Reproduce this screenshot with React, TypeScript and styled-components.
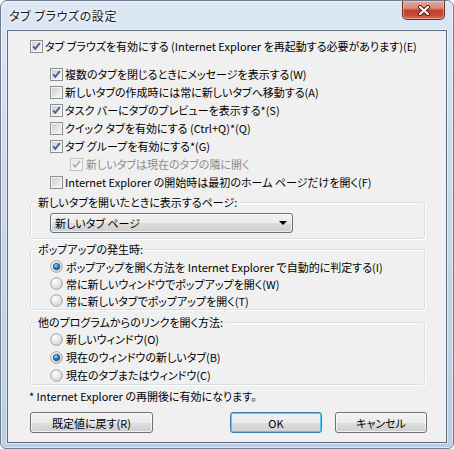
import * as React from 'react';
import styled, { createGlobalStyle } from 'styled-components';

const Global = createGlobalStyle`
  html, body {
    margin: 0;
    padding: 0;
    background: #ffffff;
  }
  body {
    font-family: "Noto Sans CJK JP", "Noto Sans", sans-serif;
  }
`;

const Window = styled.div`
  box-sizing: border-box;
  width: 454px;
  height: 449px;
  border: 1px solid #6f7c8b;
  border-radius: 7px 7px 6px 6px;
  padding: 0 6px 5px 6px;
  display: flex;
  flex-direction: column;
  background: linear-gradient(180deg, #dce7f3 0%, #cddcec 30%, #c2d3e7 70%, #bccee4 100%);
  box-shadow: inset 0 0 0 1px rgba(255, 255, 255, 0.55);
`;

const TitleBar = styled.div`
  height: 29px;
  display: flex;
  justify-content: space-between;
  align-items: flex-start;
`;

const Title = styled.div`
  padding: 6px 0 0 2px;
  font-size: 12px;
  line-height: 17px;
  letter-spacing: 0.6px;
  font-feature-settings: "palt";
  color: #1b1b1b;
  text-shadow: 0 0 6px #ffffff, 0 0 3px #ffffff;
`;

const CloseButton = styled.div`
  box-sizing: border-box;
  width: 43px;
  height: 19px;
  margin-right: 2px;
  border: 1px solid #6e2c22;
  border-top: none;
  border-radius: 0 0 5px 5px;
  background: linear-gradient(180deg, #e9a898 0%, #d88a7a 40%, #c4402a 52%, #c54b35 80%, #d97a5c 100%);
  box-shadow: inset 0 0 0 1px rgba(255, 220, 210, 0.45);
  display: flex;
  align-items: center;
  justify-content: center;
`;

const Client = styled.div`
  box-sizing: border-box;
  flex: 1;
  border: 1px solid #5d6b7c;
  background: #f0f0f0;
  padding: 6px 21px 0 22px;
  box-shadow: 0 0 0 1px rgba(255, 255, 255, 0.5);
  font-size: 11px;
  font-feature-settings: "palt";
  color: #000000;
`;

const Row = styled.div<{ $indent?: number; $h?: number; $gap?: number; $disabled?: boolean }>`
  display: flex;
  align-items: center;
  height: ${p => p.$h ?? 18}px;
  margin-left: ${p => p.$indent ?? 0}px;
  gap: ${p => p.$gap ?? 2}px;
  white-space: nowrap;
  color: ${p => (p.$disabled ? '#8d8d8d' : '#000000')};
`;

const SubList = styled.div`
  margin-top: 10px;
`;

const Group = styled.div<{ $top: number; $pt: number }>`
  position: relative;
  margin-top: ${p => p.$top}px;
  border: 1px solid #d5dfe5;
  border-radius: 3px;
  box-shadow: inset 1px 1px 0 #ffffff, 1px 1px 0 #ffffff;
  padding: ${p => p.$pt}px 0 0 19px;
`;

const Legend = styled.span`
  position: absolute;
  left: 5px;
  top: -8px;
  padding: 0 2px;
  line-height: 14px;
  background: #f0f0f0;
  white-space: nowrap;
`;

const Select = styled.div`
  box-sizing: border-box;
  width: 243px;
  height: 20px;
  margin-bottom: 5px;
  border: 1px solid #707070;
  border-radius: 3px;
  background: linear-gradient(180deg, #f2f2f2 0%, #ebebeb 50%, #dddddd 51%, #cfcfcf 100%);
  box-shadow: inset 0 0 0 1px rgba(255, 255, 255, 0.6);
  display: flex;
  align-items: center;
  justify-content: space-between;
  padding: 0 5px 0 4px;
`;

const Arrow = styled.span`
  width: 0;
  height: 0;
  border-left: 4px solid transparent;
  border-right: 4px solid transparent;
  border-top: 4px solid #000000;
`;

const Note = styled.div`
  margin-top: 4px;
  line-height: 14px;
  margin-left: -1px;
`;

const Footer = styled.div`
  margin-top: 9px;
  margin-right: -2px;
  display: flex;
  gap: 13px;
`;

const Spacer = styled.div`
  flex: 1;
`;

const Button = styled.div<{ $w: number; $default?: boolean }>`
  box-sizing: border-box;
  width: ${p => p.$w}px;
  height: 21px;
  border: 1px solid ${p => (p.$default ? '#3c7fb1' : '#707070')};
  border-radius: 3px;
  background: linear-gradient(180deg, #f2f2f2 0%, #ebebeb 50%, #dddddd 51%, #cfcfcf 100%);
  box-shadow: inset 0 0 0 1px ${p => (p.$default ? '#48d0f5' : 'rgba(255,255,255,0.7)')};
  display: flex;
  align-items: center;
  justify-content: center;
  font-size: 11px;
`;

function CheckBox({ checked, disabled }: { checked?: boolean; disabled?: boolean }) {
  const id = disabled ? 'cbd' : 'cb';
  return (
    <svg width="13" height="13" viewBox="0 0 13 13">
      <defs>
        <linearGradient id={id} x1="0" y1="0" x2="1" y2="1">
          <stop offset="0" stopColor={disabled ? '#e6e6e6' : '#cbcfd5'} />
          <stop offset="1" stopColor={disabled ? '#f8f8f8' : '#f6f6f6'} />
        </linearGradient>
      </defs>
      <rect x="0.5" y="0.5" width="12" height="12" fill="#f4f4f4" stroke={disabled ? '#c2c2c2' : '#8e8f8f'} />
      <rect x="2" y="2" width="9" height="9" fill={`url(#${id})`} />
      {checked && (
        <path
          d="M3.2 6.3 L5.3 8.8 L9.8 3.2"
          fill="none"
          stroke={disabled ? '#b3b3b3' : '#4a5f8f'}
          strokeWidth="1.9"
        />
      )}
    </svg>
  );
}

function Radio({ checked }: { checked?: boolean }) {
  return (
    <svg width="13" height="13" viewBox="0 0 13 13">
      <defs>
        <radialGradient id="rbg" cx="0.35" cy="0.3" r="0.8">
          <stop offset="0" stopColor="#ffffff" />
          <stop offset="1" stopColor="#d0d0d0" />
        </radialGradient>
        <radialGradient id="rdot" cx="0.4" cy="0.35" r="0.7">
          <stop offset="0" stopColor="#a8e0fc" />
          <stop offset="0.45" stopColor="#2d86d0" />
          <stop offset="1" stopColor="#0b3f7f" />
        </radialGradient>
      </defs>
      <circle cx="6.5" cy="6.5" r="5.8" fill="url(#rbg)" stroke="#9a9a9a" strokeWidth="0.9" />
      {checked && <circle cx="6.5" cy="6.5" r="3.3" fill="url(#rdot)" stroke="#1d3f6b" strokeWidth="0.6" />}
    </svg>
  );
}

const subItems: { text: string; checked?: boolean; disabled?: boolean; indent?: boolean }[] = [
  { text: '複数のタブを閉じるときにメッセージを表示する(W)', checked: true },
  { text: '新しいタブの作成時には常に新しいタブへ移動する(A)' },
  { text: 'タスク バーにタブのプレビューを表示する*(S)', checked: true },
  { text: 'クイック タブを有効にする (Ctrl+Q)*(Q)' },
  { text: 'タブ グループを有効にする*(G)', checked: true },
  { text: '新しいタブは現在のタブの隣に開く', checked: true, disabled: true, indent: true },
  { text: 'Internet Explorer の開始時は最初のホーム ページだけを開く(F)' },
];

const popupItems = [
  { text: 'ポップアップを開く方法を Internet Explorer で自動的に判定する(I)', checked: true },
  { text: '常に新しいウィンドウでポップアップを開く(W)' },
  { text: '常に新しいタブでポップアップを開く(T)' },
];

const linkItems = [
  { text: '新しいウィンドウ(O)' },
  { text: '現在のウィンドウの新しいタブ(B)', checked: true },
  { text: '現在のタブまたはウィンドウ(C)' },
];

function App() {
  return (
    <>
      <Global />
      <Window>
        <TitleBar>
          <Title>タブ ブラウズの設定</Title>
          <CloseButton>
            <svg width="14" height="11" viewBox="0 0 14 11">
              <path d="M3 2 L11 9 M11 2 L3 9" stroke="#4d1c14" strokeWidth="4" strokeLinecap="round" />
              <path d="M3 2 L11 9 M11 2 L3 9" stroke="#ffffff" strokeWidth="2.2" strokeLinecap="round" />
            </svg>
          </CloseButton>
        </TitleBar>
        <Client>
          <Row>
            <CheckBox checked />
            <span>タブ ブラウズを有効にする (Internet Explorer を再起動する必要があります)(E)</span>
          </Row>
          <SubList>
            {subItems.map(item => (
              <Row key={item.text} $indent={item.indent ? 40 : 20} $disabled={item.disabled} $gap={item.indent ? 3 : 2}>
                <CheckBox checked={item.checked} disabled={item.disabled} />
                <span>{item.text}</span>
              </Row>
            ))}
          </SubList>

          <Group $top={11} $pt={10}>
            <Legend>新しいタブを開いたときに表示するページ:</Legend>
            <Select>
              <span>新しいタブ ページ</span>
              <Arrow />
            </Select>
          </Group>

          <Group $top={10} $pt={8}>
            <Legend>ポップアップの発生時:</Legend>
            {popupItems.map(item => (
              <Row key={item.text} $h={17} $gap={3}>
                <Radio checked={item.checked} />
                <span>{item.text}</span>
              </Row>
            ))}
          </Group>

          <Group $top={12} $pt={7}>
            <Legend>他のプログラムからのリンクを開く方法:</Legend>
            {linkItems.map(item => (
              <Row key={item.text} $gap={3}>
                <Radio checked={item.checked} />
                <span>{item.text}</span>
              </Row>
            ))}
          </Group>

          <Note>* Internet Explorer の再開後に有効になります。</Note>

          <Footer>
            <Button $w={123}>既定値に戻す(R)</Button>
            <Spacer />
            <Button $w={92} $default>OK</Button>
            <Button $w={92}>キャンセル</Button>
          </Footer>
        </Client>
      </Window>
    </>
  );
}

export default App;
